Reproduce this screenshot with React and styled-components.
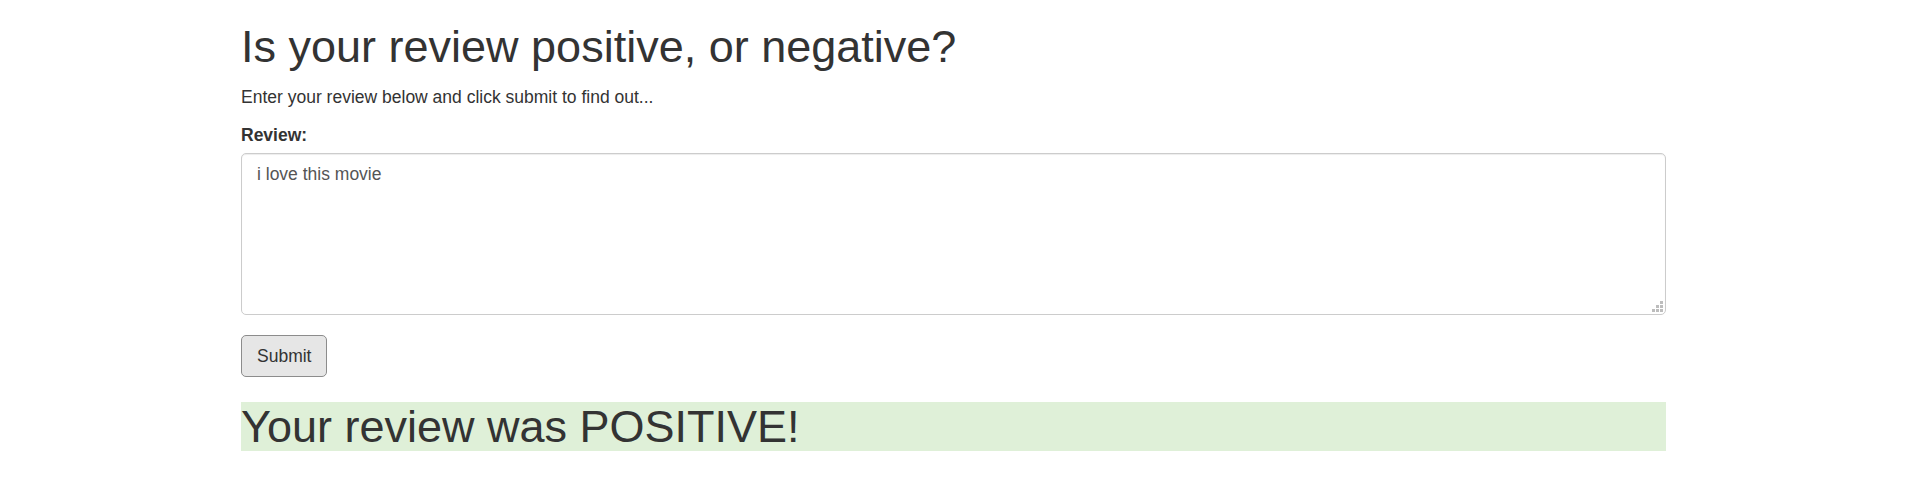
import React, { useState } from "react";
import styled, { createGlobalStyle } from "styled-components";

const Global = createGlobalStyle`
  * { box-sizing: border-box; }
  html, body { margin: 0; padding: 0; background: #fff; }
  body {
    font-family: "Liberation Sans", Arial, Helvetica, sans-serif;
    font-size: 17.5px;
    line-height: 25px;
    color: #333;
  }
`;

const Container = styled.div`
  width: 1425px;
  margin-left: 241px;
`;

const Title = styled.h1`
  font-family: "Liberation Sans", Arial, sans-serif;
  font-weight: 500;
  font-size: 45px;
  line-height: 49.5px;
  color: #333;
  margin: ${(p) => p.$top}px 0 ${(p) => p.$bottom ?? 12.5}px;
  background: ${(p) => p.$bg || "transparent"};
`;

const Lead = styled.p`
  margin: 0 0 12.8px;
`;

const Form = styled.form`
  display: flex;
  flex-direction: column;
  align-items: flex-start;
`;

const Group = styled.div`
  display: flex;
  flex-direction: column;
  width: 100%;
  margin-bottom: 20px;
`;

const Label = styled.label`
  font-weight: bold;
  margin-bottom: 5.2px;
`;

const AreaWrap = styled.div`
  position: relative;
  width: 100%;

  &::after {
    content: "";
    position: absolute;
    right: 3.5px;
    bottom: 3px;
    width: 2.5px;
    height: 2.5px;
    background: #bdbdbd;
    box-shadow: -4px 0 #bdbdbd, -8px 0 #bdbdbd, 0 -4px #bdbdbd,
      -4px -4px #bdbdbd, 0 -8px #bdbdbd;
    pointer-events: none;
  }
`;

const TextArea = styled.textarea`
  display: block;
  width: 100%;
  height: 162px;
  padding: 8.5px 15px 6.5px;
  font-family: "Liberation Sans", Arial, sans-serif;
  font-size: 17.5px;
  line-height: 25px;
  color: #555;
  background: #fff;
  border: 1.25px solid #ccc;
  border-radius: 5px;
  box-shadow: inset 0 1px 1px rgba(0, 0, 0, 0.075);
  outline: none;
  resize: none;
`;

const Button = styled.button`
  font-family: "Liberation Sans", Arial, sans-serif;
  font-size: 17.5px;
  line-height: 25px;
  padding: 8.5px 15px 6.5px;
  height: 41.7px;
  color: #333;
  background: #e6e6e6;
  border: 1.25px solid #8c8c8c;
  border-radius: 5px;
  cursor: pointer;
`;

export default function App() {
  const [text, setText] = useState("i love this movie");
  return (
    <>
      <Global />
      <Container>
        <Title $top={22} $bottom={13.5}>Is your review positive, or negative?</Title>
        <Lead>Enter your review below and click submit to find out...</Lead>
        <Form onSubmit={(e) => e.preventDefault()}>
          <Group>
            <Label htmlFor="review">Review:</Label>
            <AreaWrap>
              <TextArea
                id="review"
                value={text}
                onChange={(e) => setText(e.target.value)}
              />
            </AreaWrap>
          </Group>
          <Button type="submit">Submit</Button>
        </Form>
        <Title $top={25} $bg="#dff0d8">Your review was POSITIVE!</Title>
      </Container>
    </>
  );
}
